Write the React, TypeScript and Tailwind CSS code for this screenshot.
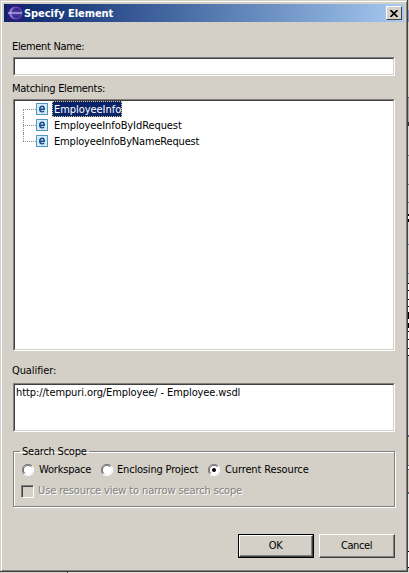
import type { ReactNode } from 'react';

const sunken =
  'border border-t-[#808080] border-l-[#808080] border-r-white border-b-white';
const sunkenInner =
  'h-full w-full border border-t-[#404040] border-l-[#404040] border-r-[#d4d0c8] border-b-[#d4d0c8] bg-white';

function Field({ className, children }: { className: string; children?: ReactNode }) {
  return (
    <div className={`${sunken} ${className}`}>
      <div className={sunkenInner}>{children}</div>
    </div>
  );
}

function TitleIcon() {
  return (
    <svg width="16" height="16" viewBox="0 0 16 16" className="shrink-0">
      <rect width="16" height="16" fill="#2a1c78" />
      <circle cx="9" cy="8" r="6.500" fill="#5a4cb0" />
      <circle cx="9.500" cy="8" r="5" fill="#382a8c" />
      <path d="M8 1.500C4 2.500 2 5 2 8s2 5.500 6 6.500C5.500 12.500 4.700 10 4.700 8S5.500 3.500 8 1.500z" fill="#8578cc" />
      <path d="M1 8h14" stroke="#b5aae6" strokeWidth="1.500" />
      <path d="M5 6h9M5 10h9" stroke="#5244a4" strokeWidth=".8" />
    </svg>
  );
}

function ElementIcon() {
  return (
    <svg width="12" height="12" viewBox="0 0 12 12" className="shrink-0">
      <rect x=".5" y=".5" width="11" height="11" fill="#d5ecf8" stroke="#5296bd" />
      <path d="M4 6.200h4.200C8.200 4.200 7.500 3.300 6.100 3.300 4.600 3.300 3.800 4.400 3.800 6s.9 2.800 2.500 2.800c.8 0 1.300-.2 1.800-.6" fill="none" stroke="#1c4e92" strokeWidth="1.600" />
    </svg>
  );
}

function Radio({ checked = false }: { checked?: boolean }) {
  return (
    <svg width="12" height="12" viewBox="0 0 12 12" className="shrink-0">
      <circle cx="6" cy="6" r="5" fill="white" />
      <path d="M1.900 10.100A5.500 5.500 0 0 1 10.100 1.900" fill="none" stroke="#808080" />
      <path d="M2.700 9.300A4.500 4.500 0 0 1 9.300 2.700" fill="none" stroke="#404040" strokeWidth=".8" />
      <path d="M10.100 1.900A5.500 5.500 0 0 1 1.900 10.100" fill="none" stroke="white" />
      {checked && <circle cx="6" cy="6" r="2" fill="black" />}
    </svg>
  );
}

function TreeRow({ label, selected, first, last, tracking }: { label: string; selected?: boolean; first?: boolean; last?: boolean; tracking: string }) {
  return (
    <div className="flex h-4 items-center">
      <div className="ml-2 flex h-4 w-[13px] flex-col">
        <div className={first ? 'h-[8px]' : 'h-[8px] border-l border-dotted border-[#909090]'} />
        <div className={last ? 'h-[8px] border-t border-dotted border-[#909090]' : 'h-[8px] border-t border-l border-dotted border-[#909090]'} />
      </div>
      <ElementIcon />
      <span
        className={`ml-[4px] h-4 pr-px pl-[2px] leading-[17px] ${tracking} ${
          selected ? 'bg-[#0a246a] text-white outline-1 -outline-offset-1 outline-dotted outline-[#d8c890]' : ''
        }`}
      >
        {label}
      </span>
    </div>
  );
}

const edgeMarks = [
  'h-[10px] bg-[#c8c4bc]', 'h-[12px] bg-[#909cb8]', 'h-[75px] bg-[#d4d0c8]', 'h-px bg-[#606060]',
  'h-[24px] bg-[#a8a8a8]', 'h-[4px] bg-[#303030]', 'h-[29px] bg-[#d8d8d8]', 'h-px bg-[#707888]',
  'h-[28px] bg-[#d8d8d8]', 'h-px bg-[#707888]', 'h-[17px] bg-[#d8d8d8]', 'h-px bg-[#707888]',
  'h-[11px] bg-[#d8d8d8]', 'h-[2px] bg-black', 'h-[3px] bg-white', 'h-[3px] bg-black',
  'h-[22px] bg-[#d8d8d8]', 'h-px bg-[#7080a0]', 'h-[28px] bg-[#d8d8d8]', 'h-px bg-[#7080a0]',
  'h-[9px] bg-[#d8d8d8]', 'h-px bg-black', 'h-[6px] bg-white', 'h-px bg-black', 'h-[8px] bg-white',
  'h-px bg-black', 'h-[6px] bg-white', 'h-px bg-black', 'h-[5px] bg-white', 'h-[7px] bg-black',
  'h-[4px] bg-white', 'h-[5px] bg-black', 'h-[3px] bg-white', 'h-px bg-black', 'h-[7px] bg-white',
  'h-px bg-black', 'h-[8px] bg-white', 'h-px bg-black', 'h-[6px] bg-white', 'h-px bg-black',
  'h-[79px] bg-[#d8d8d8]', 'h-[2px] bg-[#606878]', 'h-[28px] bg-[#d4d0c8]', 'h-px bg-[#606878]',
  'h-[3px] bg-white', 'h-px bg-[#606878]', 'h-[22px] bg-[#d4d0c8]', 'h-[2px] bg-[#606878]',
  'h-[57px] bg-[#e8e8e8]', 'h-px bg-black', 'h-[15px] bg-white', 'h-px bg-black', 'grow bg-[#d8d8d8]',
];

export default function App() {
  return (
    <div className="flex h-[573px] w-[409px] flex-col overflow-hidden bg-[#d4d0c8] font-['DejaVu_Sans_Condensed','DejaVu_Sans',sans-serif] text-[11px] leading-[14px] whitespace-nowrap text-black [font-stretch:condensed]">
      <div className="flex h-[572px]">
        <div className="flex w-[408px] flex-col border-r border-b border-[#404040] pl-px pt-px">
          <div className="flex grow flex-col border border-t-white border-l-white border-r-[#808080] border-b-[#808080] pl-[2px] pt-[2px]">
            <div className="flex h-[18px] w-[400px] items-center bg-linear-to-r from-[#0a246a] to-[#a6caf0] pr-[2px] pl-[3px]">
              <TitleIcon />
              <span className="ml-px grow pt-px font-bold tracking-[-0.05px] text-white">Specify Element</span>
              <div className="flex h-[14px] w-4 items-center justify-center border border-t-white border-l-white border-r-[#404040] border-b-[#404040] bg-[#d4d0c8]">
                <svg width="8" height="7" viewBox="0 0 8 7">
                  <path d="M.5 0l7 7M7.500 0l-7 7" stroke="black" strokeWidth="1.600" />
                </svg>
              </div>
            </div>
            <div className="flex w-[391px] grow flex-col pl-[9px]">
              <span className="-ml-px mt-[18px] h-[17px] tracking-[-0.34px]">Element Name:</span>
              <Field className="h-[19px]" />
              <span className="-ml-px mt-[6px] h-[17px] tracking-[-0.28px]">Matching Elements:</span>
              <Field className="h-[252px]">
                <TreeRow label="EmployeeInfo" selected first tracking="tracking-[-0.05px]" />
                <TreeRow label="EmployeeInfoByIdRequest" tracking="tracking-[-0.09px]" />
                <TreeRow label="EmployeeInfoByNameRequest" last tracking="tracking-[-0.18px]" />
              </Field>
              <span className="-ml-px mt-[13px] h-[19px] tracking-[-0.1px]">Qualifier:</span>
              <Field className="h-[49px]">
                <div className="pt-[1px] pl-px tracking-[-0.1px]">http://tempuri.org/Employee/ - Employee.wsdl</div>
              </Field>
              <fieldset className="mt-[12px] h-[63px] w-[382px] border border-[#808080] shadow-[1px_1px_0_white,inset_1px_1px_0_white]">
                <legend className="ml-[6px] h-[14px] px-[2px] leading-[15px] tracking-[-0.22px]">Search Scope</legend>
                <div className="mt-[5px] ml-[8px] flex h-[14px] items-center">
                  <div className="flex w-[79px] items-center gap-[5px] tracking-[-0.2px]"><Radio />Workspace</div>
                  <div className="flex w-[107px] items-center gap-[4px] tracking-[-0.18px]"><Radio />Enclosing Project</div>
                  <div className="flex items-center gap-[5px] tracking-[-0.12px]"><Radio checked />Current Resource</div>
                </div>
                <div className="mt-[7px] ml-[7px] flex h-[14px] items-center gap-[4px] leading-[16px] tracking-[-0.12px] text-[#808080] [text-shadow:1px_1px_0_white]">
                  <div className="h-[13px] w-[13px] border border-t-[#808080] border-l-[#808080] border-r-white border-b-white shadow-[inset_1px_1px_0_#404040]" />
                  Use resource view to narrow search scope
                </div>
              </fieldset>
              <div className="mt-[27px] flex justify-end gap-[5px]">
                <div className="h-[24px] w-[76px] border border-black">
                  <div className="flex h-full items-center justify-center border border-t-white border-l-white border-r-[#404040] border-b-[#404040] pr-px tracking-[-0.5px] shadow-[inset_-1px_-1px_0_#808080]">OK</div>
                </div>
                <div className="flex h-[24px] w-[76px] items-center justify-center border border-t-white border-l-white border-r-[#404040] border-b-[#404040] pr-px tracking-[-0.4px] shadow-[inset_-1px_-1px_0_#808080]">Cancel</div>
              </div>
            </div>
          </div>
        </div>
        <div className="flex w-px flex-col">
          {edgeMarks.map((mark, i) => (
            <div key={i} className={`shrink-0 ${mark}`} />
          ))}
        </div>
      </div>
      <div className="flex h-px">
        <div className="w-[67px] bg-[#d4d0c8]" />
        <div className="w-px bg-[#404040]" />
        <div className="grow bg-[#e4e2dc]" />
      </div>
    </div>
  );
}
